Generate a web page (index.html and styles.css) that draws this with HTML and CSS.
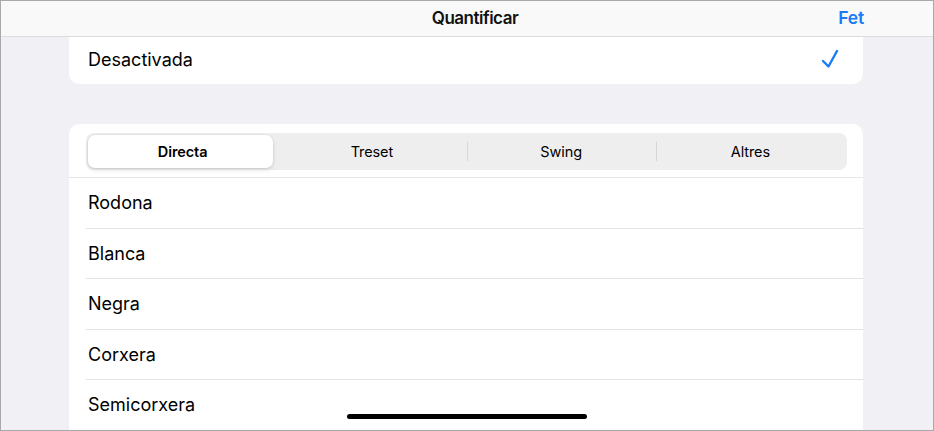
FILE: index.html
```html
<!DOCTYPE html>
<html lang="ca">
<head>
<meta charset="utf-8">
<title>Quantificar</title>
<link rel="stylesheet" href="styles.css">
</head>
<body>
<div class="frame">
  <header class="nav">
    <div class="nav-title">Quantificar</div>
    <div class="nav-done">Fet</div>
  </header>
  <main class="content">
    <section class="card card-top">
      <div class="option-row">
        <span class="label">Desactivada</span>
        <svg class="check" width="18" height="20" viewBox="0 0 18 20"><path d="M2 12 L7.5 17.5 L16 2" fill="none" stroke="#1a7cf5" stroke-width="2.4" stroke-linecap="round" stroke-linejoin="round"/></svg>
      </div>
    </section>
    <section class="card card-list">
      <div class="seg-wrap">
        <div class="segmented">
          <div class="seg seg-active">Directa</div>
          <div class="seg">Treset</div>
          <div class="seg seg-div">Swing</div>
          <div class="seg seg-div">Altres</div>
        </div>
      </div>
      <ul class="rows">
        <li class="row">Rodona</li>
        <li class="row">Blanca</li>
        <li class="row">Negra</li>
        <li class="row">Corxera</li>
        <li class="row">Semicorxera</li>
      </ul>
    </section>
  </main>
  <div class="home-indicator"></div>
</div>
</body>
</html>
```
FILE: styles.css
```css
html, body {
  margin: 0;
  padding: 0;
  background: #ffffff;
}
body {
  font-family: Inter, "Noto Sans", "Liberation Sans", sans-serif;
  color: #000;
}
.frame {
  position: relative;
  width: 934px;
  height: 431px;
  box-sizing: border-box;
  border: 1px solid #a9a9ab;
  background: #f0f0f5;
  overflow: hidden;
}
.nav {
  height: 36px;
  box-sizing: border-box;
  border-bottom: 1px solid #dcdcde;
  background: #f9f9f9;
  display: flex;
  align-items: center;
  justify-content: center;
  position: relative;
}
.nav-title {
  font-size: 17px;
  font-weight: 600;
  letter-spacing: -0.5px;
  margin-top: -2px;
  margin-left: 16px;
  color: #111;
}
.nav-done {
  position: absolute;
  right: 69px;
  top: 6px;
  font-size: 17.5px;
  font-weight: 600;
  letter-spacing: -0.2px;
  color: #1a7cf5;
}
.content {
  display: flex;
  flex-direction: column;
  padding-left: 68px;
}
.card {
  width: 794px;
  background: #fff;
}
.card-top {
  border-radius: 0 0 10px 10px;
  height: 47px;
}
.option-row {
  height: 100%;
  display: flex;
  align-items: center;
  justify-content: space-between;
  padding: 0 24px 0 19px;
  box-sizing: border-box;
}
.label {
  font-size: 18px;
  margin-top: -3px;
}
.check {
  display: block;
  margin-top: -3px;
}
.card-list {
  margin-top: 40px;
  border-radius: 10px 10px 0 0;
  height: 320px;
}
.seg-wrap {
  padding: 9px 16px 7px 17px;
  border-bottom: 1px solid #e6e6e8;
}
.segmented {
  height: 37px;
  box-sizing: border-box;
  padding: 2px;
  border-radius: 8px;
  background: #eeeeef;
  display: grid;
  grid-template-columns: repeat(4, 1fr);
}
.seg {
  display: flex;
  align-items: center;
  justify-content: center;
  font-size: 14.5px;
  letter-spacing: -0.1px;
  position: relative;
}
.seg-div::before {
  content: "";
  position: absolute;
  left: 0;
  top: 7px;
  bottom: 7px;
  width: 1px;
  background: #d6d6d8;
}
.seg-active {
  background: #fff;
  border-radius: 7px;
  font-weight: 600;
  margin-right: 4px;
  padding-left: 4px;
  box-shadow: 0 0 0 0.5px rgba(0,0,0,0.06), 0 2px 4px rgba(0,0,0,0.12);
}
.rows {
  list-style: none;
  margin: 0;
  padding: 0 0 0 17px;
}
.row {
  height: 50.5px;
  box-sizing: border-box;
  border-bottom: 1px solid #e3e3e5;
  display: flex;
  align-items: center;
  padding-left: 2px;
  font-size: 18px;
}
.home-indicator {
  position: absolute;
  left: 346px;
  top: 413px;
  width: 240px;
  height: 5px;
  border-radius: 3px;
  background: #000;
}
```
